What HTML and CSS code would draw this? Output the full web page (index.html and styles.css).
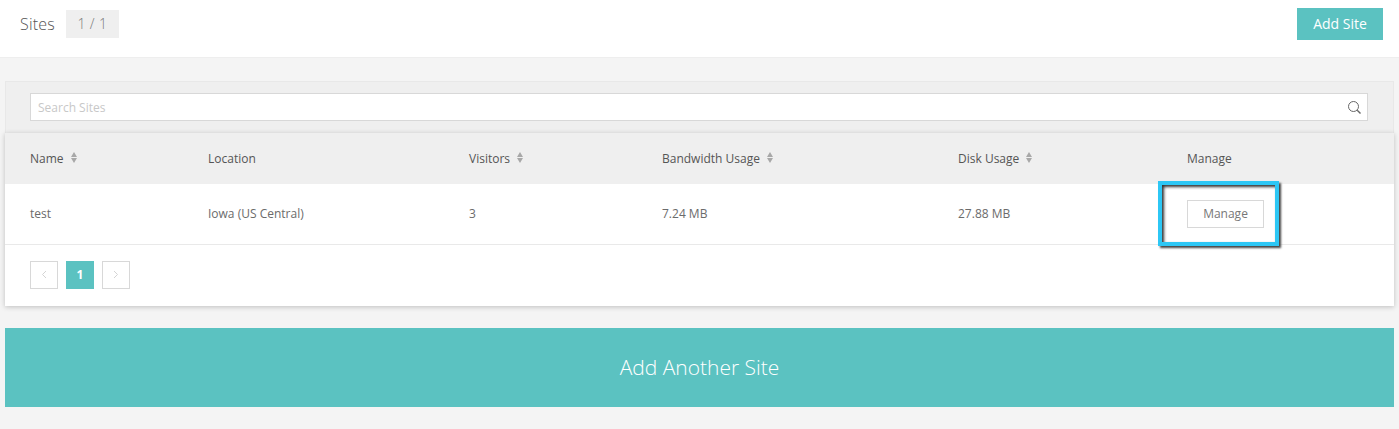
FILE: index.html
```html
<!DOCTYPE html>
<html>
<head>
    <title>Sites</title>
    <link rel="stylesheet" href="styles.css">
</head>
<body>
    <header class="top-bar">
        <h1 class="top-title">Sites</h1>
        <span class="top-count">1 / 1</span>
        <a class="add-site" href="#">Add Site</a>
    </header>

    <main class="content">
        <div class="search-band">
            <div class="search-box">
                <input type="text" class="search-input" placeholder="Search Sites">
                <svg class="search-icon" width="15" height="15" viewBox="0 0 15 15" fill="none" stroke="#666" stroke-width="1">
                    <circle cx="6.5" cy="6.5" r="5"/>
                    <path d="M10.2 10.2L13.5 13.5" stroke-width="1.4"/>
                </svg>
            </div>
        </div>

        <div class="card">
            <table class="sites-table">
                <thead>
                    <tr>
                        <th class="col-name">Name <span class="sort"></span></th>
                        <th class="col-location">Location</th>
                        <th class="col-visitors">Visitors <span class="sort"></span></th>
                        <th class="col-bandwidth">Bandwidth Usage <span class="sort"></span></th>
                        <th class="col-disk">Disk Usage <span class="sort"></span></th>
                        <th>Manage</th>
                    </tr>
                </thead>
                <tbody>
                    <tr>
                        <td>test</td>
                        <td>Iowa (US Central)</td>
                        <td>3</td>
                        <td>7.24 MB</td>
                        <td>27.88 MB</td>
                        <td>
                            <span class="manage-wrap">
                                <a class="manage-btn" href="#">Manage</a>
                                <span class="highlight"></span>
                            </span>
                        </td>
                    </tr>
                </tbody>
            </table>

            <div class="pager">
                <a class="page-btn" href="#">
                    <svg width="6" height="9" viewBox="0 0 6 9" fill="none" stroke="#d4d4d4"><path d="M5 1L1.5 4.5L5 8"/></svg>
                </a>
                <a class="page-btn page-current" href="#">1</a>
                <a class="page-btn" href="#">
                    <svg width="6" height="9" viewBox="0 0 6 9" fill="none" stroke="#d4d4d4"><path d="M1 1L4.5 4.5L1 8"/></svg>
                </a>
            </div>
        </div>

        <a class="add-another" href="#">Add Another Site</a>
    </main>
</body>
</html>
```

FILE: styles.css
```css
* {
    box-sizing: border-box;
}
html, body {
    height: 100%;
}
body {
    margin: 0;
    background-color: #f4f4f4;
    font-family: "Open Sans", sans-serif;
    font-size: 12px;
    color: #6b6b6b;
    overflow: hidden;
}
a {
    text-decoration: none;
}

.top-bar {
    display: flex;
    align-items: flex-start;
    height: 58px;
    padding: 8px 16px 0 20px;
    background-color: #fff;
    border-bottom: 1px solid #eee;
}
.top-title {
    margin: 0;
    font-size: 16px;
    font-weight: 300;
    line-height: 32px;
    letter-spacing: 0.2px;
    color: #555;
}
.top-count {
    margin: 2px 0 0 11px;
    width: 53px;
    height: 28px;
    background-color: #efefef;
    font-size: 14px;
    font-weight: 300;
    line-height: 28px;
    letter-spacing: 0.4px;
    text-align: center;
    color: #777;
}
.add-site {
    margin-left: auto;
    width: 86px;
    height: 32px;
    background-color: #5bc2c1;
    color: #fff;
    font-size: 14px;
    line-height: 32px;
    text-align: center;
}

.content {
    padding: 23px 5px 0;
}
.search-band {
    height: 52px;
    padding: 11px 25px 0 24px;
    background-color: #efefef;
    border: 1px solid #e8e8e8;
    border-bottom: 0;
}
.search-box {
    display: flex;
    align-items: center;
    height: 28px;
    padding-right: 5px;
    background-color: #fff;
    border: 1px solid #d8d8d8;
}
.search-input {
    flex: 1;
    min-width: 0;
    height: 100%;
    padding: 0 7px;
    border: 0;
    outline: 0;
    background: transparent;
    font-family: inherit;
    font-size: 12px;
}
.search-input::placeholder {
    color: #c8c8c8;
    opacity: 1;
}

.card {
    height: 173px;
    background-color: #fff;
    box-shadow: 0 1px 5px rgba(0, 0, 0, 0.22);
}
.sites-table {
    width: 100%;
    border-collapse: collapse;
    table-layout: fixed;
}
.sites-table th {
    height: 51px;
    padding: 0 0 0 25px;
    background-color: #efefef;
    font-weight: 400;
    text-align: left;
    color: #555;
}
.sites-table td {
    height: 60px;
    padding: 0 0 0 25px;
    border-bottom: 1px solid #e9e9e9;
}
.col-name {
    width: 178px;
}
.col-location {
    width: 261px;
}
.col-visitors {
    width: 193px;
}
.col-bandwidth {
    width: 296px;
}
.col-disk {
    width: 229px;
}
.sort {
    display: inline-block;
    position: relative;
    width: 7px;
    height: 11px;
    margin-left: 4px;
    vertical-align: 0;
}
.sort::before,
.sort::after {
    content: "";
    position: absolute;
    left: 0;
    border-left: 3.5px solid transparent;
    border-right: 3.5px solid transparent;
}
.sort::before {
    top: 0;
    border-bottom: 5px solid #a8a8a8;
}
.sort::after {
    bottom: 0;
    border-top: 5px solid #a8a8a8;
}

.manage-wrap {
    display: inline-block;
    position: relative;
}
.manage-btn {
    display: block;
    width: 77px;
    height: 28px;
    border: 1px solid #d8d8d8;
    line-height: 26px;
    text-align: center;
    color: #777;
}
.highlight {
    position: absolute;
    top: -19px;
    left: -29px;
    width: 121px;
    height: 65px;
    border: 4px solid #2dc7f5;
    box-shadow: 2px 2px 2px #444, inset 2px 2px 3px #333;
    pointer-events: none;
}

.pager {
    display: flex;
    gap: 8px;
    padding: 16px 0 0 25px;
}
.page-btn {
    display: flex;
    align-items: center;
    justify-content: center;
    width: 28px;
    height: 28px;
    border: 1px solid #d8d8d8;
    font-weight: 700;
    color: #fff;
}
.page-current {
    background-color: #5bc2c1;
    border-color: #5bc2c1;
}

.add-another {
    display: block;
    height: 79px;
    margin-top: 22px;
    background-color: #5bc2c1;
    color: #fff;
    font-size: 21px;
    font-weight: 300;
    line-height: 79px;
    text-align: center;
}
```
